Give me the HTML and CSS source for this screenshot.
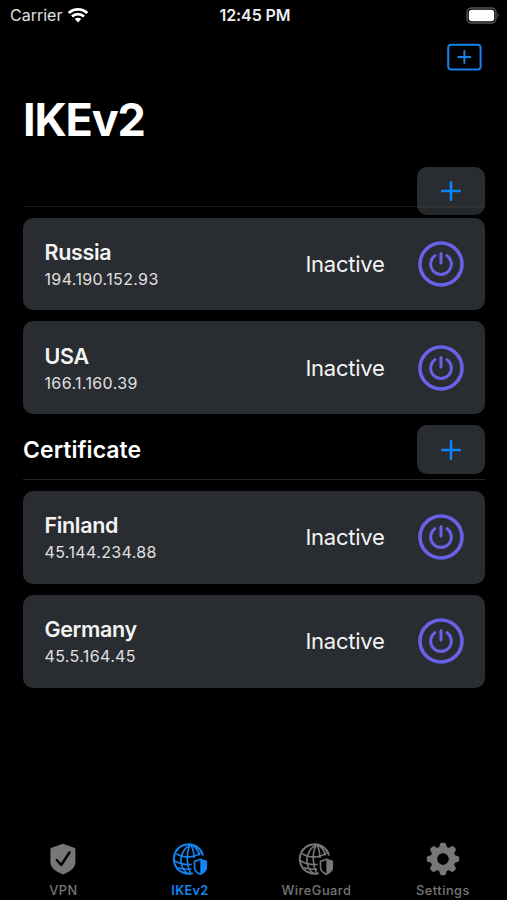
FILE: index.html
```
<!DOCTYPE html>
<html lang="en">
<head>
<meta charset="utf-8">
<title>IKEv2</title>
<link rel="stylesheet" href="styles.css">
</head>
<body>
<svg width="0" height="0" class="defs" aria-hidden="true">
  <symbol id="power" viewBox="0 0 46 46">
    <circle cx="23" cy="23" r="21" stroke-width="3.6"/>
    <path d="M23 12.4V22" stroke-width="3"/>
    <path d="M17 14.6A10.4 10.4 0 1 0 29 14.6" stroke-width="2.9"/>
  </symbol>
  <symbol id="plus" viewBox="0 0 20 20">
    <path d="M10 1.2V18.8M1.2 10H18.8" stroke-width="2.5"/>
  </symbol>
  <symbol id="globe" viewBox="0 0 36 34">
    <g fill="none" stroke="currentColor" stroke-width="1.6">
      <path d="M31 13.5A14.8 14.8 0 1 0 20.8 31.2" stroke-width="2"/>
      <path d="M18.3 2.3C11.5 7 8.5 13.5 9 19.5C9.3 24 11.5 28.5 15.5 31.4"/>
      <path d="M18.3 2.3C15.5 8 15 13 15.3 18C15.6 24 17 28 18.6 31.4"/>
      <path d="M18.3 2.3C21 6 21.8 10.5 21.8 14.6V16"/>
      <path d="M18.3 2.3C24 5 26.8 9.5 27.5 13.5"/>
      <path d="M4.4 11.6C9.5 15.8 21 16.4 28.5 10.8M2.5 18.8C8 22 14 23 19.6 22.5M5.8 25.8C10 27 15 27.5 19.3 27"/>
      <path d="M28.3 17.3L34.3 19.4V25.4C34.3 28.8 31.6 30.6 28.3 32.2C25 30.6 22.5 28.8 22.5 25.4V19.4Z"/>
    </g>
    <path fill="currentColor" d="M28.3 17.3L34.3 19.4V25.4C34.3 28.8 31.6 30.6 28.3 32.2Z"/>
  </symbol>
</svg>
<div class="screen">
  <header class="status">
    <div class="carrier"><span class="carrier-name">Carrier</span>
      <svg class="wifi" viewBox="0 0 22 16">
        <g fill="none" stroke="currentColor" stroke-width="2.8">
          <path d="M1.7 6.1A13.4 13.4 0 0 1 20.3 6.1"/>
          <path d="M5 9.5A8.6 8.6 0 0 1 17 9.5"/>
        </g>
        <path fill="currentColor" d="M7.8 12.1A4.6 4.6 0 0 1 14.2 12.1L11 15.5Z"/>
      </svg>
    </div>
    <div class="clock">12:45 PM</div>
    <svg class="battery" viewBox="0 0 34 17">
      <rect x="1" y="1" width="29" height="15" rx="4.5" fill="none" stroke="#555557" stroke-width="1.4"/>
      <rect x="2.8" y="2.8" width="25.4" height="11.4" rx="3" fill="#fff"/>
      <path d="M31.7 6.3Q34 8.5 31.7 10.7Z" fill="#555557"/>
    </svg>
  </header>
  <nav class="nav">
    <svg class="new" viewBox="0 0 36 28">
      <rect x="2.2" y="1.7" width="32.4" height="24.7" rx="3" stroke-width="2"/>
      <path d="M18.4 8V20M12.4 14H24.4" stroke-width="2"/>
    </svg>
  </nav>
  <h1 class="title">IKEv2</h1>
  <main class="list">
    <section class="group">
      <div class="group-head overlap"><h2 class="heading"></h2><div class="add"><svg><use href="#plus"/></svg></div></div>
      <div class="card"><div class="info"><div class="name">Russia</div><div class="ip">194.190.152.93</div></div><div class="state">Inactive</div><svg class="power"><use href="#power"/></svg></div>
      <div class="card"><div class="info"><div class="name">USA</div><div class="ip">166.1.160.39</div></div><div class="state">Inactive</div><svg class="power"><use href="#power"/></svg></div>
    </section>
    <section class="group">
      <div class="group-head"><h2 class="heading">Certificate</h2><div class="add"><svg><use href="#plus"/></svg></div></div>
      <div class="card"><div class="info"><div class="name">Finland</div><div class="ip">45.144.234.88</div></div><div class="state">Inactive</div><svg class="power"><use href="#power"/></svg></div>
      <div class="card"><div class="info"><div class="name">Germany</div><div class="ip">45.5.164.45</div></div><div class="state">Inactive</div><svg class="power"><use href="#power"/></svg></div>
    </section>
  </main>
  <footer class="tabs">
    <div class="tab"><svg viewBox="0 0 36 34"><path fill="currentColor" d="M18 1.7L29.2 5.8Q30.4 6.3 30.4 7.6V20C30.4 26 25.5 29.2 18 32.4C10.5 29.2 5.4 26 5.4 20V7.6Q5.4 6.3 6.6 5.8Z"/><path d="M11.8 18L16.2 23L24.5 10.5" fill="none" stroke="#000" stroke-width="2.4" stroke-linecap="round" stroke-linejoin="round"/></svg><span>VPN</span></div>
    <div class="tab active"><svg><use href="#globe"/></svg><span>IKEv2</span></div>
    <div class="tab"><svg><use href="#globe"/></svg><span>WireGuard</span></div>
    <div class="tab"><svg viewBox="-18 -17 36 34">
      <g fill="currentColor">
        <path id="tooth" d="M-4.5 -10L-2.8 -15.2Q-2.5 -16.2 -1.5 -16.2H1.5Q2.5 -16.2 2.8 -15.2L4.5 -10V10L2.8 15.2Q2.5 16.2 1.5 16.2H-1.5Q-2.5 16.2 -2.8 15.2L-4.5 10ZM-4.5 -6H4.5V6H-4.5Z" fill-rule="evenodd"/>
        <use href="#tooth" transform="rotate(45)"/><use href="#tooth" transform="rotate(90)"/><use href="#tooth" transform="rotate(135)"/>
      </g>
      <circle r="9" fill="none" stroke="currentColor" stroke-width="7"/><circle r="5.7" fill="#000"/>
    </svg><span>Settings</span></div>
  </footer>
</div>
</body>
</html>
```

FILE: styles.css
```
* { box-sizing: border-box; }
body { margin: 0; background: #000; color: #fff; font-family: Inter, "Liberation Sans", sans-serif; }
svg { display: block; flex: none; }
.defs { position: absolute; }
.screen { width: 507px; height: 900px; display: flex; flex-direction: column; overflow: hidden; }
.status { height: 30px; display: grid; grid-template-columns: 1fr auto 1fr; align-items: center; padding: 0 7px 0 10px; }
.carrier { display: flex; align-items: center; gap: 5px; font-size: 16px; color: #e0e0e0; }
.wifi { width: 22px; height: 16px; color: #fff; }
.clock { font-size: 16px; font-weight: 600; color: #ededed; letter-spacing: -.1px; }
.battery { width: 34px; height: 17px; justify-self: end; }
.nav { height: 56px; padding: 13px 25px 0 0; display: flex; justify-content: flex-end; }
.new { width: 36px; height: 28px; fill: none; stroke: #1683ed; stroke-linecap: round; }
.title { margin: 0; height: 80.5px; padding: 6px 22px 0 23px; font-size: 45px; line-height: 56px; font-weight: 700; letter-spacing: -1.2px; }
.list { padding: 0 22px 0 23px; display: flex; flex-direction: column; gap: 11px; }
.group { display: flex; flex-direction: column; gap: 11px; }
.group-head { height: 54.5px; display: flex; justify-content: space-between; align-items: flex-start; border-bottom: 1px solid #242529; }
.overlap { height: 40px; border-bottom-color: #1b1c1e; }
.overlap .add { background: linear-gradient(#292c30 39px, #313437 39px, #313437 41px, #25282b 41px); }
.heading { margin: 0; font-size: 23px; line-height: 50px; font-weight: 600; letter-spacing: .05px; }
.add { width: 68.5px; height: 48.5px; border-radius: 10px; background: #292c30; display: grid; place-items: center; flex: none; }
.add svg { width: 20px; height: 20px; stroke: #0b84ff; stroke-linecap: round; }
.card { height: 92.9px; border-radius: 10px; background: #292c30; display: flex; align-items: center; padding: 0 21.5px; }
.info { flex: 1; color: #f4f4f5; padding-top: 1.5px; }
.name { font-size: 21.5px; line-height: 28px; font-weight: 600; letter-spacing: -.35px; }
.ip { font-size: 16px; line-height: 26px; color: #e0e0e2; letter-spacing: .36px; }
.state { font-size: 22px; margin-right: 33px; color: #f4f4f5; letter-spacing: -.25px; }
.power { width: 46px; height: 46px; fill: none; stroke: #6961e8; stroke-linecap: round; }
.tabs { margin-top: auto; height: 58px; display: grid; grid-template-columns: repeat(4, 126.5px); }
.tab { display: flex; flex-direction: column; align-items: center; gap: 6.5px; color: #777; font-size: 12.8px; line-height: 16px; font-weight: 500; letter-spacing: .5px; }
.tab svg { width: 36px; height: 34px; }
.tab span { margin-right: -.5px; }
.active { color: #1485f4; }
.active span { letter-spacing: .3px; font-weight: 600; }
```
